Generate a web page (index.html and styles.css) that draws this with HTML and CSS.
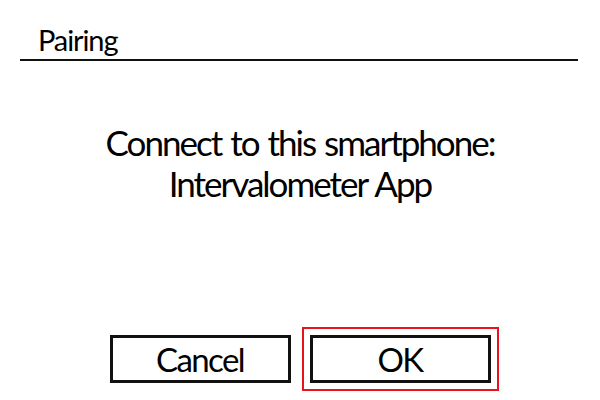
FILE: index.html
```html
<!DOCTYPE html>
<html>
<head>
<meta charset="utf-8">
<link rel="stylesheet" href="styles.css">
</head>
<body>
<div class="screen">
  <header class="title-bar">
    <h1 class="title">Pairing</h1>
  </header>
  <main class="message">
    <p class="line">Connect to this smartphone:</p>
    <p class="line">Intervalometer App</p>
  </main>
  <footer class="actions">
    <div class="btn-wrap">
      <button class="btn">Cancel</button>
    </div>
    <div class="btn-wrap selected">
      <button class="btn">OK</button>
    </div>
  </footer>
</div>
</body>
</html>
```

FILE: styles.css
```css
html, body {
  margin: 0;
  padding: 0;
  background: #fff;
}
.screen {
  width: 600px;
  height: 400px;
  display: flex;
  flex-direction: column;
  font-family: "Lato", "Open Sans", sans-serif;
  color: #000;
}
.title-bar {
  margin: 0 22px 0 20px;
  padding: 22px 0 0 18px;
  height: 37px;
  border-bottom: 2px solid #111;
  box-sizing: content-box;
}
.title {
  margin: 0;
  font-size: 29px;
  font-weight: 400;
  line-height: 36px;
  letter-spacing: -1.1px;
}
.message {
  margin-top: 61px;
  text-align: center;
}
.line {
  margin: 0;
  font-size: 35px;
  line-height: 41px;
  letter-spacing: -2px;
  word-spacing: 2px;
}
.actions {
  margin-top: auto;
  margin-bottom: 9px;
  display: flex;
  justify-content: center;
  gap: 3px;
}
.btn-wrap {
  padding: 6px;
  border: 2px solid transparent;
}
.btn-wrap.selected {
  border-color: #e8141b;
}
.btn {
  display: block;
  width: 181px;
  height: 48px;
  margin: 0;
  padding: 0;
  background: #fff;
  border: 3px solid #111;
  font: inherit;
  font-size: 33px;
  line-height: 40px;
  letter-spacing: -1.6px;
  color: #000;
}
```
